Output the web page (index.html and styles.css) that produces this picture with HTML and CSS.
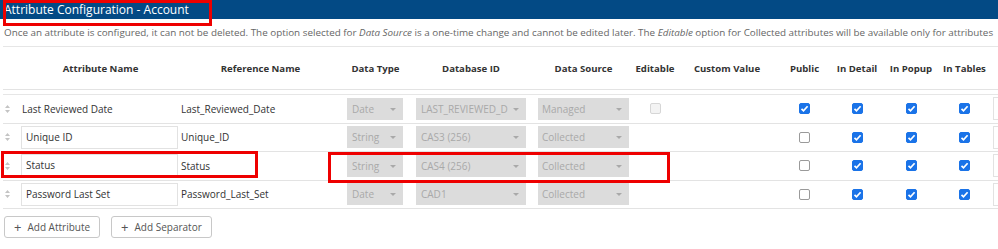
FILE: index.html
```html
<!DOCTYPE html>
<html lang="en">
<head>
  <meta charset="UTF-8" />
  <title>Attribute Configuration - Account</title>
  <link rel="stylesheet" href="styles.css">
</head>
<body>
  <div class="page">
    <div class="titlebar">Attribute Configuration - Account</div>
    <p class="note">Once an attribute is configured, it can not be deleted. The option selected for <em>Data Source</em> is a one-time change and cannot be edited later. The <em>Editable</em> option for Collected attributes will be available only for attributes</p>

    <div class="grid head">
      <div></div>
      <div>Attribute Name</div>
      <div>Reference Name</div>
      <div>Data Type</div>
      <div>Database ID</div>
      <div>Data Source</div>
      <div>Editable</div>
      <div>Custom Value</div>
      <div>Public</div>
      <div>In Detail</div>
      <div>In Popup</div>
      <div>In Tables</div>
      <div></div>
    </div>

    <div class="rows">
      <div class="grid row">
        <div class="handle"><svg width="5" height="8" viewBox="0 0 5 8"><path d="M2.5 0 L5 3 H0 Z M0 5 H5 L2.5 8 Z" fill="#c4c4c4"/></svg></div>
        <div class="plain">Last Reviewed Date</div>
        <div class="plain">Last_Reviewed_Date</div>
        <div><span class="select sel-type">Date</span></div>
        <div><span class="select sel-db">LAST_REVIEWED_D</span></div>
        <div><span class="select sel-src">Managed</span></div>
        <div class="mid"><span class="check disabled"></span></div>
        <div></div>
        <div class="mid"><span class="check on"></span></div>
        <div class="mid"><span class="check on"></span></div>
        <div class="mid"><span class="check on"></span></div>
        <div class="mid"><span class="check on"></span></div>
        <div><span class="field stub"></span></div>
      </div>
      <div class="grid row">
        <div class="handle"><svg width="5" height="8" viewBox="0 0 5 8"><path d="M2.5 0 L5 3 H0 Z M0 5 H5 L2.5 8 Z" fill="#c4c4c4"/></svg></div>
        <div><span class="field">Unique ID</span></div>
        <div class="plain">Unique_ID</div>
        <div><span class="select sel-type">String</span></div>
        <div><span class="select sel-db">CAS3 (256)</span></div>
        <div><span class="select sel-src">Collected</span></div>
        <div></div>
        <div></div>
        <div class="mid"><span class="check"></span></div>
        <div class="mid"><span class="check on"></span></div>
        <div class="mid"><span class="check on"></span></div>
        <div class="mid"><span class="check on"></span></div>
        <div><span class="field stub"></span></div>
      </div>
      <div class="grid row">
        <div class="handle"><svg width="5" height="8" viewBox="0 0 5 8"><path d="M2.5 0 L5 3 H0 Z M0 5 H5 L2.5 8 Z" fill="#c4c4c4"/></svg></div>
        <div><span class="field">Status</span></div>
        <div class="plain">Status</div>
        <div><span class="select sel-type">String</span></div>
        <div><span class="select sel-db">CAS4 (256)</span></div>
        <div><span class="select sel-src">Collected</span></div>
        <div></div>
        <div></div>
        <div class="mid"><span class="check"></span></div>
        <div class="mid"><span class="check on"></span></div>
        <div class="mid"><span class="check on"></span></div>
        <div class="mid"><span class="check on"></span></div>
        <div><span class="field stub"></span></div>
      </div>
      <div class="grid row">
        <div class="handle"><svg width="5" height="8" viewBox="0 0 5 8"><path d="M2.5 0 L5 3 H0 Z M0 5 H5 L2.5 8 Z" fill="#c4c4c4"/></svg></div>
        <div><span class="field">Password Last Set</span></div>
        <div class="plain">Password_Last_Set</div>
        <div><span class="select sel-type">Date</span></div>
        <div><span class="select sel-db">CAD1</span></div>
        <div><span class="select sel-src">Collected</span></div>
        <div></div>
        <div></div>
        <div class="mid"><span class="check"></span></div>
        <div class="mid"><span class="check on"></span></div>
        <div class="mid"><span class="check on"></span></div>
        <div class="mid"><span class="check on"></span></div>
        <div><span class="field stub"></span></div>
      </div>
    </div>

    <div class="actions">
      <button><span class="plus">+</span>Add Attribute</button>
      <button><span class="plus">+</span>Add Separator</button>
    </div>

    <div class="mark mark-title"></div>
    <div class="mark mark-name"></div>
    <div class="mark mark-source"></div>
  </div>
</body>
</html>
```

FILE: styles.css
```css
body {
  margin: 0;
  font-family: 'Open Sans', sans-serif;
  font-size: 10px;
  color: #333;
  background: white;
}

.page {
  position: relative;
  width: 998px;
  height: 249px;
  overflow: hidden;
}

.titlebar {
  height: 19px;
  line-height: 19px;
  background: #034a85;
  color: white;
  font-size: 12px;
  padding-left: 4px;
}

.note {
  margin: 0 0 0 3px;
  padding: 6px 0 7px 1px;
  line-height: 14px;
  font-size: 9.85px;
  color: #666;
  white-space: nowrap;
  border-bottom: 1px solid #e6e6e6;
}

.grid {
  display: grid;
  grid-template-columns: 18px 159px 161px 69px 122px 103px 40px 104px 51px 54px 54px 53px 1fr;
  align-items: center;
  margin-left: 3px;
}

.head {
  height: 42px;
  border-bottom: 1px solid #e3e3e3;
  font-weight: bold;
  font-size: 9.6px;
  text-align: center;
  white-space: nowrap;
}

.rows {
  margin-top: 4px;
  margin-left: 3px;
  border-top: 1px solid #e6e6e6;
}

.rows .grid {
  margin-left: 0;
}

.row {
  height: 28.5px;
  box-sizing: border-box;
  border-bottom: 1px solid #e3e3e3;
  white-space: nowrap;
}

.handle {
  display: flex;
  padding-left: 2px;
}

.plain {
  padding-left: 1px;
}

.field {
  display: block;
  box-sizing: border-box;
  width: 157px;
  height: 23px;
  line-height: 21px;
  border: 1px solid #e2e2e2;
  padding-left: 4px;
}

.field.stub {
  width: 40px;
  margin-left: 2px;
}

.select {
  display: block;
  position: relative;
  box-sizing: border-box;
  height: 22px;
  line-height: 22px;
  margin-left: 6px;
  padding-left: 5px;
  background: #dcdcdc;
  color: #a9a9a9;
  overflow: hidden;
}

.select::after {
  content: "";
  position: absolute;
  right: 7px;
  top: 10px;
  border-left: 3px solid transparent;
  border-right: 3px solid transparent;
  border-top: 3px solid #a9a9a9;
}

.sel-type { width: 56px; }
.sel-db { width: 110px; padding-right: 18px; }
.sel-src { width: 91px; padding-left: 4px; }

.mid {
  display: flex;
  justify-content: center;
}

.check {
  display: block;
  width: 11px;
  height: 11px;
  box-sizing: border-box;
  border: 1px solid #9a9a9a;
  border-radius: 2px;
  background: white;
}

.check.on {
  border-color: #1a73e8;
  background: #1a73e8 url("data:image/svg+xml,%3Csvg xmlns='http://www.w3.org/2000/svg' viewBox='0 0 11 11'%3E%3Cpath d='M2.5 5.8 L4.5 7.8 L8.6 3.2' fill='none' stroke='white' stroke-width='1.7'/%3E%3C/svg%3E") center / 11px 11px no-repeat;
}

.check.disabled {
  border-color: #d6d6d6;
  background: #f3f3f3;
}

.actions {
  display: flex;
  gap: 11px;
  margin: 7px 0 0 4px;
}

button {
  height: 22px;
  padding: 0 9px;
  border: 1px solid #c8c8c8;
  border-radius: 3px;
  background: white;
  color: #555;
  font-family: 'Open Sans', sans-serif;
  font-size: 10px;
  display: flex;
  align-items: center;
}

.plus {
  font-size: 13px;
  margin-right: 6px;
  line-height: 1;
}

.mark {
  position: absolute;
  border: 3px solid #ee0000;
  box-sizing: border-box;
}

.mark-title {
  left: 3px;
  top: 0;
  width: 209px;
  height: 26px;
}

.mark-name {
  left: 1px;
  top: 151px;
  width: 257px;
  height: 27px;
}

.mark-source {
  left: 328px;
  top: 152px;
  width: 342px;
  height: 31px;
}
```
